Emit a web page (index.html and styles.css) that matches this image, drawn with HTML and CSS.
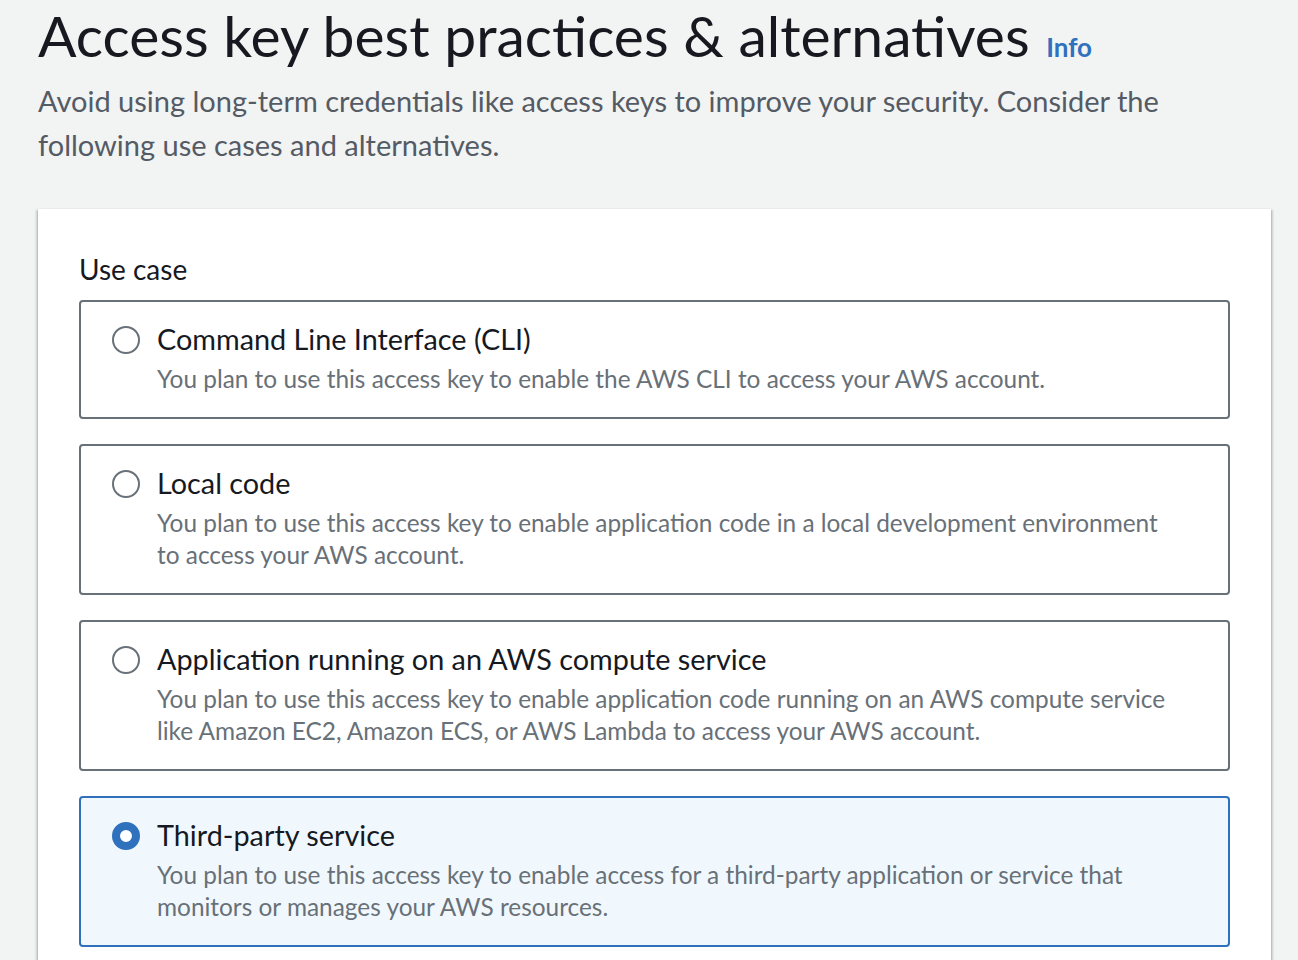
FILE: index.html
```html
<!DOCTYPE html>
<html lang="en">
<head>
<meta charset="utf-8">
<title>Access key best practices &amp; alternatives</title>
<link rel="stylesheet" href="styles.css">
</head>
<body>
<main class="page">
  <header class="page-header">
    <h1 class="title">Access key best practices &amp; alternatives <a class="info" href="#">Info</a></h1>
    <p class="lead">Avoid using long-term credentials like access keys to improve your security. Consider the following use cases and alternatives.</p>
  </header>
  <section class="card">
    <div class="label">Use case</div>
    <div class="options">
      <label class="option">
        <span class="radio"></span>
        <span class="option-body">
          <span class="option-title">Command Line Interface (CLI)</span>
          <span class="option-desc">You plan to use this access key to enable the AWS CLI to access your AWS account.</span>
        </span>
      </label>
      <label class="option">
        <span class="radio"></span>
        <span class="option-body">
          <span class="option-title">Local code</span>
          <span class="option-desc">You plan to use this access key to enable application code in a local development environment to access your AWS account.</span>
        </span>
      </label>
      <label class="option">
        <span class="radio"></span>
        <span class="option-body">
          <span class="option-title">Application running on an AWS compute service</span>
          <span class="option-desc">You plan to use this access key to enable application code running on an AWS compute service like Amazon EC2, Amazon ECS, or AWS Lambda to access your AWS account.</span>
        </span>
      </label>
      <label class="option selected">
        <span class="radio checked"></span>
        <span class="option-body">
          <span class="option-title">Third-party service</span>
          <span class="option-desc">You plan to use this access key to enable access for a third-party application or service that monitors or manages your AWS resources.</span>
        </span>
      </label>
    </div>
  </section>
</main>
</body>
</html>
```

FILE: styles.css
```css
html, body {
  margin: 0;
  padding: 0;
  background: #f2f3f3;
  font-family: "Lato", "Open Sans", sans-serif;
  color: #16191f;
  height: 960px;
  overflow: hidden;
}

.page {
  padding: 0 27px 0 38px;
}

.page-header {
  padding-top: 3px;
}

.title {
  margin: 0;
  font-size: 57px;
  font-weight: 400;
  line-height: 64px;
  color: #16191f;
}

.info {
  font-size: 26px;
  line-height: 1;
  font-weight: 700;
  color: #2f71bd;
  text-decoration: none;
  margin-left: 2px;
}

.lead {
  margin: 12px 0 0;
  font-size: 29px;
  line-height: 44px;
  color: #545b64;
  max-width: 1140px;
}

.card {
  margin-top: 42px;
  background: #ffffff;
  padding: 43px 41px 0 41px;
  box-shadow: 0 1px 2px 0 rgba(0, 28, 36, 0.3), 2px 1px 2px 0 rgba(0, 28, 36, 0.15), -2px 1px 2px 0 rgba(0, 28, 36, 0.15);
  min-height: 800px;
}

.label {
  font-size: 28px;
  line-height: 34px;
  margin-bottom: 14px;
}

.options {
  display: flex;
  flex-direction: column;
  gap: 25px;
}

.option {
  display: flex;
  align-items: flex-start;
  gap: 17px;
  border: 2px solid #687078;
  border-radius: 4px;
  padding: 19px 50px 22px 31px;
  background: #ffffff;
}

.option.selected {
  border-color: #2f71bd;
  background: #f1f8fd;
}

.radio {
  flex: none;
  width: 24px;
  height: 24px;
  border: 2px solid #687078;
  border-radius: 50%;
  margin-top: 5px;
  box-sizing: content-box;
}

.radio.checked {
  width: 12px;
  height: 12px;
  border: 8px solid #2f71bd;
  background: #ffffff;
}

.option-body {
  display: flex;
  flex-direction: column;
}

.option-title {
  font-size: 28.8px;
  line-height: 36px;
  color: #16191f;
}

.option-desc {
  margin-top: 6px;
  font-size: 24.4px;
  line-height: 32px;
  color: #687078;
}
```
